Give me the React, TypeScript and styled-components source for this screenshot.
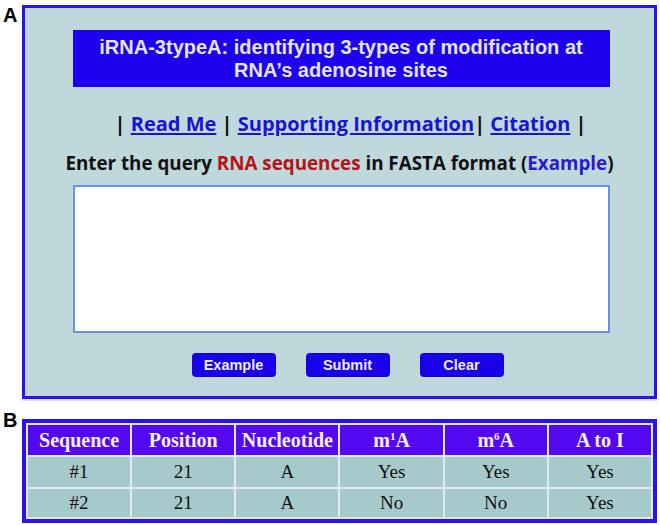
import React from "react";
import styled, { createGlobalStyle } from "styled-components";

const GlobalStyle = createGlobalStyle`
  html, body {
    margin: 0;
    padding: 0;
    background: #fff;
  }
  body {
    font-family: "Liberation Sans", Arial, sans-serif;
  }
`;

const Page = styled.div`
  width: 660px;
  padding: 5px 3px 0 3px;
  box-sizing: border-box;
`;

const Figure = styled.section<{ $gap?: number }>`
  display: grid;
  grid-template-columns: 19px 1fr;
  margin-top: ${(p) => p.$gap ?? 0}px;
`;

const Letter = styled.div<{ $top: number }>`
  font-family: "Liberation Sans", Arial, sans-serif;
  font-weight: 700;
  font-size: 20px;
  line-height: 1;
  color: #000;
  margin-top: ${(p) => p.$top}px;
`;

const Panel = styled.div`
  border: 3px solid #2a12f0;
  background: #bfd8dc;
  height: 394px;
  box-sizing: border-box;
  padding: 22px 0 0 0;
  display: flex;
  flex-direction: column;
  align-items: center;
  box-shadow: 0 2px 0 #dedcf8;
`;

const TitleBox = styled.div`
  width: 537px;
  height: 57px;
  margin-left: 3px;
  background: #1c00ee;
  color: #e4e4ee;
  font-weight: 700;
  font-size: 20px;
  line-height: 23px;
  text-align: center;
  display: flex;
  align-items: center;
  justify-content: center;
  box-sizing: border-box;
  padding-top: 1px;
`;

const Links = styled.div`
  margin-top: 24px;
  margin-left: 22px;
  font-family: "Open Sans", "Noto Sans", sans-serif;
  font-weight: 700;
  font-size: 20px;
  line-height: 26px;
  color: #111;
  white-space: nowrap;
`;

const Link = styled.a`
  color: #1a14d0;
  text-decoration: underline;
  text-underline-offset: 2px;
`;

const Prompt = styled.div`
  margin-top: 14px;
  font-family: "Open Sans", "Noto Sans", sans-serif;
  font-weight: 700;
  font-size: 18.8px;
  line-height: 24px;
  color: #111;
  white-space: nowrap;
`;

const Red = styled.span`
  color: #b41414;
`;

const Blue = styled.span`
  color: #2a1ad0;
`;

const Query = styled.textarea`
  display: block;
  margin-top: 10px;
  margin-left: 3px;
  width: 537px;
  height: 148px;
  box-sizing: border-box;
  border: 2px solid #6a90e4;
  background: #fff;
  resize: none;
  outline: none;
`;

const Buttons = styled.div`
  display: flex;
  gap: 30px;
  margin-top: 20px;
  margin-left: 16px;
`;

const Button = styled.button`
  width: 84px;
  height: 24px;
  border: none;
  border-radius: 4px;
  background: #1a00ea;
  color: #eeeef4;
  font-family: "Liberation Sans", Arial, sans-serif;
  font-weight: 700;
  font-size: 14.5px;
  padding: 0;
  cursor: pointer;
`;

const Table = styled.table`
  width: 635px;
  table-layout: fixed;
  border: 4px solid #2a12f0;
  border-collapse: separate;
  border-spacing: 2px;
  background: #e0eaee;
  font-family: "Liberation Serif", "Times New Roman", serif;
  font-size: 19px;
  text-align: center;
`;

const Head = styled.th`
  background: #5408f0;
  color: #f4f0ff;
  font-weight: 700;
  font-size: 20px;
  height: 30px;
  padding: 0;
`;

const Cell = styled.td<{ $h: number }>`
  background: #a6c9cc;
  color: #111;
  height: ${(p) => p.$h}px;
  padding: 0;
`;

const Sup = styled.sup`
  font-size: 11px;
  vertical-align: 7px;
  line-height: 0;
`;

const rows = [
  ["#1", "21", "A", "Yes", "Yes", "Yes"],
  ["#2", "21", "A", "No", "No", "Yes"],
];

export default function App() {
  return (
    <Page>
      <GlobalStyle />
      <Figure>
        <Letter $top={0}>A</Letter>
        <Panel>
          <TitleBox>
            iRNA-3typeA: identifying 3-types of modification at
            <br />
            RNA’s adenosine sites
          </TitleBox>
          <Links>
            | <Link href="#">Read Me</Link> |{" "}
            <Link href="#">Supporting Information</Link>|{" "}
            <Link href="#">Citation</Link> |
          </Links>
          <Prompt>
            Enter the query <Red>RNA sequences</Red> in FASTA format (
            <Blue>Example</Blue>)
          </Prompt>
          <Query />
          <Buttons>
            <Button>Example</Button>
            <Button>Submit</Button>
            <Button>Clear</Button>
          </Buttons>
        </Panel>
      </Figure>
      <Figure $gap={20}>
        <Letter $top={-9}>B</Letter>
        <Table>
          <thead>
            <tr>
              <Head>Sequence</Head>
              <Head>Position</Head>
              <Head>Nucleotide</Head>
              <Head>
                m<Sup>1</Sup>A
              </Head>
              <Head>
                m<Sup>6</Sup>A
              </Head>
              <Head>A to I</Head>
            </tr>
          </thead>
          <tbody>
            {rows.map((r, i) => (
              <tr key={i}>
                {r.map((c, j) => (
                  <Cell key={j} $h={i === 0 ? 30 : 28}>
                    {c}
                  </Cell>
                ))}
              </tr>
            ))}
          </tbody>
        </Table>
      </Figure>
    </Page>
  );
}
